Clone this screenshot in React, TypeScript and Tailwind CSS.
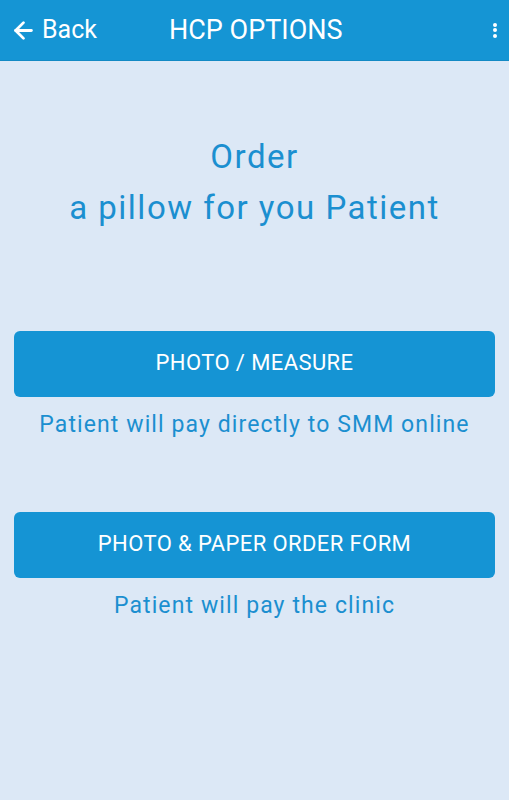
import { ArrowLeft } from "lucide-react";

const OptionButton = ({ label, note }: { label: string; note: string }) => (
  <div className="flex flex-col items-center">
    <button className="h-[66px] w-full rounded-[6px] bg-[#1594d4] pb-[4px] text-[22px] tracking-[0.4px] text-white">
      {label}
    </button>
    <p className="mt-[12px] text-[23px] leading-[32px] tracking-[1.1px] text-[#1b8fd0]">{note}</p>
  </div>
);

export default function App() {
  return (
    <div className="flex min-h-[800px] w-[509px] flex-col bg-[#dce8f6] font-['Roboto',sans-serif]">
      <header className="flex h-[61px] items-center border-b border-[#1289c4] bg-[#1595d4] text-white">
        <div className="flex w-[150px] items-center pl-[10px]">
          <ArrowLeft size={27} strokeWidth={2.5} />
          <span className="ml-[5px] text-[25px]">Back</span>
        </div>
        <h1 className="ml-[19px] flex-1 text-[27px]">HCP OPTIONS</h1>
        <div className="flex flex-col gap-[1.5px] pr-[12px]">
          <span className="h-[4px] w-[4px] rounded-full bg-white" />
          <span className="h-[4px] w-[4px] rounded-full bg-white" />
          <span className="h-[4px] w-[4px] rounded-full bg-white" />
        </div>
      </header>
      <div className="mt-[70px] text-center text-[33px] leading-[51px] tracking-[1.5px] text-[#1b8fd0]">
        <p>Order</p>
        <p>a pillow for you Patient</p>
      </div>
      <div className="mt-[98px] flex flex-col gap-[71px] px-[14px]">
        <OptionButton label="PHOTO / MEASURE" note="Patient will pay directly to SMM online" />
        <OptionButton label="PHOTO & PAPER ORDER FORM" note="Patient will pay the clinic" />
      </div>
    </div>
  );
}
